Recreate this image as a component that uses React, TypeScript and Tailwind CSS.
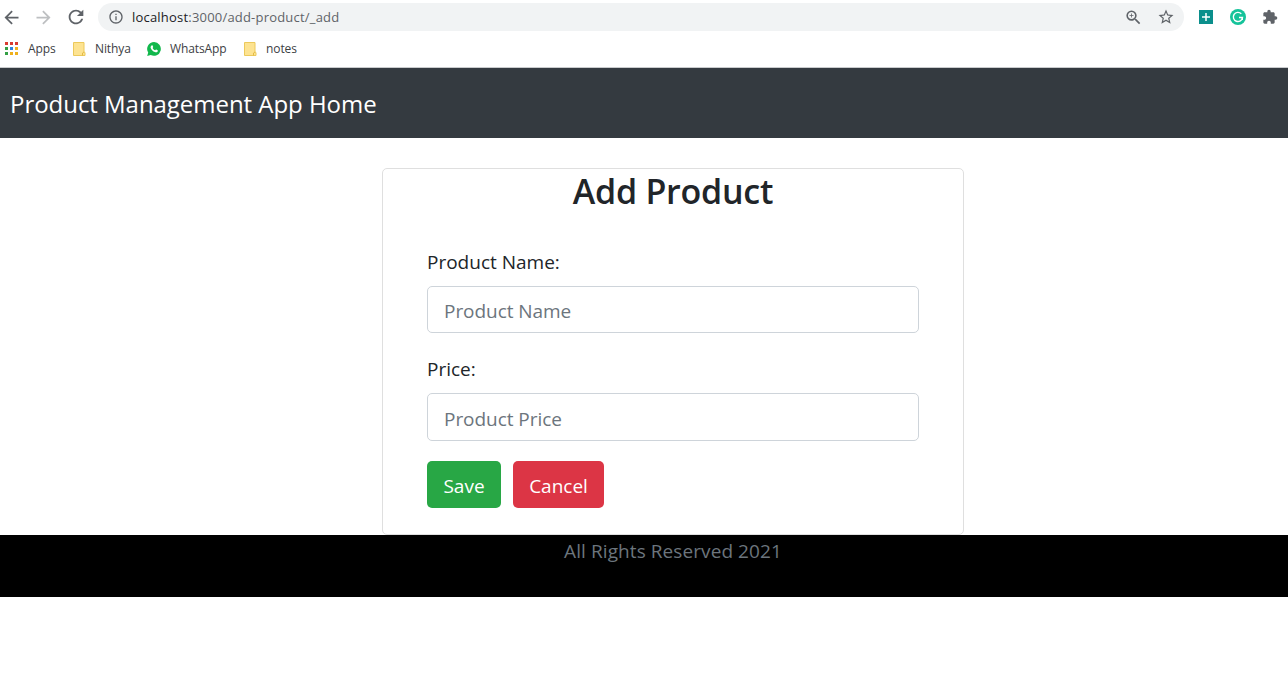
import React from "react";
import {
  MdArrowBack,
  MdArrowForward,
  MdRefresh,
  MdInfoOutline,
  MdZoomIn,
  MdStarBorder,
  MdExtension,
} from "react-icons/md";

const appColors = [
  "#d93b30", "#d93b30", "#d93b30",
  "#34a045", "#2f84e0", "#efb01c",
  "#34a045", "#efb01c", "#efb01c",
];

function AppsIcon() {
  return (
    <svg width="14" height="14" viewBox="0 0 14 14">
      {appColors.map((color, i) => (
        <rect key={i} x={(i % 3) * 5} y={Math.floor(i / 3) * 5} width="3" height="3" fill={color} />
      ))}
    </svg>
  );
}

function FolderIcon() {
  return (
    <svg width="13" height="14" viewBox="0 0 13 14">
      <path d="M.5 .5h10.5v9.5l1 .5v3H.5z" fill="#fde391" stroke="#ecc95b" />
      <path d="M9.5 13.5v-2.5l1.5-1" fill="none" stroke="#e3bb45" />
    </svg>
  );
}

function WhatsAppIcon() {
  return (
    <svg width="14" height="14" viewBox="0 0 14 14">
      <path d="M7.1 0A6.9 6.9 0 0 0 1.2 10.5L.2 14l3.5-1A6.9 6.9 0 1 0 7.1 0z" fill="#12b84c" />
      <path
        d="M4.6 3.4c.5-.3.9-.2 1.1.3l.5 1.2c.1.4-.4.7-.6 1 .6 1.2 1.4 1.9 2.6 2.4.4-.3.7-.9 1.1-.7l1.3.7c.4.2.2 1-.1 1.4-.6.7-1.6.8-2.6.4C5.9 9.4 4.6 8.1 3.8 6.3c-.5-1.1-.1-2.3.8-2.9z"
        fill="#fff"
      />
    </svg>
  );
}

function BrowserChrome() {
  return (
    <header className="flex h-[68px] flex-col border-b border-[#c9cbcd] bg-white text-[#5f6368]">
      <div className="flex h-[34px] items-center">
        <MdArrowBack className="ml-[1px] h-[21px] w-[21px]" />
        <MdArrowForward className="ml-[11px] h-[21px] w-[21px] text-[#bdbfc1]" />
        <MdRefresh className="ml-[11px] h-[22px] w-[22px]" />
        <div className="ml-[11px] flex h-7 w-[1086px] items-center rounded-full bg-[#f1f3f4] pr-[9px] pl-[10px]">
          <MdInfoOutline className="h-4 w-4" />
          <span className="ml-2 pt-px text-[13px] tracking-[0.2px] whitespace-nowrap">
            <span className="text-[#202124]">localhost</span>:3000/add-product/_add
          </span>
          <MdZoomIn className="ml-auto h-[19px] w-[19px]" />
          <MdStarBorder className="ml-[14px] h-[18px] w-[18px]" />
        </div>
        <svg className="ml-[15px]" width="14" height="14" viewBox="0 0 14 14">
          <rect width="14" height="14" fill="#0b8f8c" />
          <path d="M7 3v8M3 7h8" stroke="#fff" strokeWidth="1.5" />
        </svg>
        <svg className="ml-[17px]" width="16" height="16" viewBox="0 0 16 16">
          <circle cx="8" cy="8" r="8" fill="#15c39a" />
          <path d="M11.3 4.8A4.6 4.6 0 1 0 12.5 8.5H9" fill="none" stroke="#fff" strokeWidth="1.4" />
          <path d="M12.4 8.5v2.5" stroke="#fff" strokeWidth="1.2" />
        </svg>
        <MdExtension className="ml-[16px] h-4 w-4" />
      </div>
      <nav className="flex h-[30px] items-center text-[12px] tracking-[-0.1px] text-[#3c4043]">
        <a className="flex w-[68px] items-center gap-[9px] pl-[5px]"><AppsIcon /><span>Apps</span></a>
        <a className="flex w-[75px] items-center gap-[9px] pl-[5px]"><FolderIcon /><span>Nithya</span></a>
        <a className="flex w-[96px] items-center gap-[9px] pl-[4px]"><WhatsAppIcon /><span>WhatsApp</span></a>
        <a className="flex items-center gap-[9px] pl-[5px]"><FolderIcon /><span>notes</span></a>
      </nav>
    </header>
  );
}

function Field({ label, placeholder, inputClass }: { label: string; placeholder: string; inputClass: string }) {
  return (
    <label className="flex flex-col">
      <span className="h-[38px] text-[19px] leading-[28px] text-[#212529]">{label}</span>
      <input
        placeholder={placeholder}
        className={`w-full rounded-[5px] border border-[#ced4da] bg-white px-4 text-[19px] tracking-[-0.05px] placeholder:text-[#6c757d] ${inputClass}`}
      />
    </label>
  );
}

export default function App() {
  return (
    <div className="min-h-[692px] bg-white font-['Open_Sans','Noto_Sans',sans-serif]">
      <BrowserChrome />
      <nav className="flex h-[70px] items-center bg-[#343a40] pl-[10px]">
        <a className="pt-0.5 text-[24px] tracking-[-0.04px] whitespace-nowrap text-white">Product Management App Home</a>
      </nav>
      <main className="flex justify-center pt-[30px] pl-[58px]">
        <section className="h-[367px] w-[582px] rounded-[5px] border border-[#dfdfdf] px-11">
          <h1 className="h-[79px] text-center text-[34px] leading-[44px] font-semibold tracking-[-0.25px] text-[#212529]">Add Product</h1>
          <form className="flex flex-col gap-[22px]">
            <Field label="Product Name:" placeholder="Product Name" inputClass="h-[47px] pt-0.5" />
            <Field label="Price:" placeholder="Product Price" inputClass="h-[48px] pt-[3px]" />
            <div className="-mt-0.5 flex gap-3 text-[19px] text-white">
              <button type="button" className="h-[47px] w-[74px] rounded-[5px] bg-[#28a745] pt-1">Save</button>
              <button type="button" className="h-[47px] w-[91px] rounded-[5px] bg-[#dc3545] pt-1">Cancel</button>
            </div>
          </form>
        </section>
      </main>
      <footer className="h-[62px] bg-black pl-[58px] text-center text-[19px] leading-[32px] tracking-[0.08px] text-[#6c757d]">
        All Rights Reserved 2021
      </footer>
    </div>
  );
}
